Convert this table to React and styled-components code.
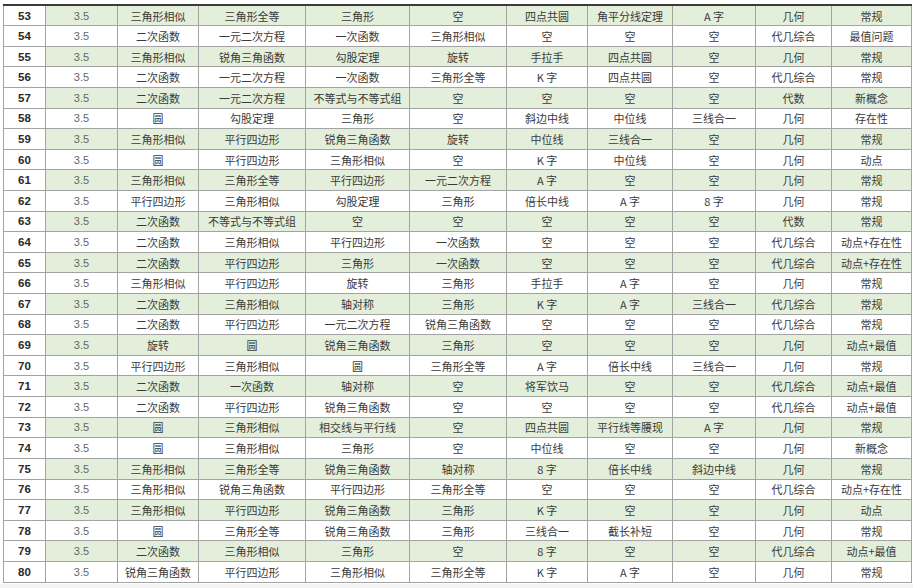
import React from "react";
import styled, { createGlobalStyle } from "styled-components";

const Global = createGlobalStyle`
  html, body { margin: 0; padding: 0; background: #ffffff; }
  body { font-family: "Noto Sans CJK SC", "Liberation Sans", sans-serif; }
`;

const Page = styled.div`
  width: 913px;
  height: 588px;
  padding: 4px 2px 0 3px;
  box-sizing: border-box;
  background: linear-gradient(#fff 0, #fff 584px, #f3f3f3 584px);
  overflow: hidden;
`;

const Table = styled.table`
  width: 908px;
  border-collapse: collapse;
  table-layout: fixed;
  border-top: 2px solid #3a3a3a;
`;

const Row = styled.tr`
  height: 20.62px;
  background: ${(p) => (p.$shade ? "#e3efda" : "#ffffff")};
`;

const Cell = styled.td`
  border: 1px solid #a3a3a3;
  padding: 0;
  text-align: center;
  vertical-align: middle;
  font-size: 11px;
  line-height: 14px;
  color: #3a3a3a;
  white-space: nowrap;
  overflow: hidden;
`;

const NumCell = styled(Cell)`
  background: #ffffff;
  font-family: "Liberation Sans", Arial, sans-serif;
  font-weight: bold;
  font-size: 11.5px;
  color: #2a2a2a;
`;

const ScoreCell = styled(Cell)`
  font-family: "Liberation Sans", Arial, sans-serif;
  font-size: 11px;
  color: #666666;
`;

const widths = [42, 72, 81, 107, 104, 97, 81, 85, 83, 76, 80];

const rows = [
  ["三角形相似", "三角形全等", "三角形", "空", "四点共圆", "角平分线定理", "A 字", "几何", "常规"],
  ["二次函数", "一元二次方程", "一次函数", "三角形相似", "空", "空", "空", "代几综合", "最值问题"],
  ["三角形相似", "锐角三角函数", "勾股定理", "旋转", "手拉手", "四点共圆", "空", "几何", "常规"],
  ["二次函数", "一元二次方程", "一次函数", "三角形全等", "K 字", "四点共圆", "空", "代几综合", "常规"],
  ["二次函数", "一元二次方程", "不等式与不等式组", "空", "空", "空", "空", "代数", "新概念"],
  ["圆", "勾股定理", "三角形", "空", "斜边中线", "中位线", "三线合一", "几何", "存在性"],
  ["三角形相似", "平行四边形", "锐角三角函数", "旋转", "中位线", "三线合一", "空", "几何", "常规"],
  ["圆", "平行四边形", "三角形相似", "空", "K 字", "中位线", "空", "几何", "动点"],
  ["三角形相似", "三角形全等", "平行四边形", "一元二次方程", "A 字", "空", "空", "几何", "常规"],
  ["平行四边形", "三角形相似", "勾股定理", "三角形", "倍长中线", "A 字", "8 字", "几何", "常规"],
  ["二次函数", "不等式与不等式组", "空", "空", "空", "空", "空", "代数", "常规"],
  ["二次函数", "三角形相似", "平行四边形", "一次函数", "空", "空", "空", "代几综合", "动点+存在性"],
  ["二次函数", "平行四边形", "三角形", "一次函数", "空", "空", "空", "代几综合", "动点+存在性"],
  ["三角形相似", "平行四边形", "旋转", "三角形", "手拉手", "A 字", "空", "几何", "常规"],
  ["二次函数", "三角形相似", "轴对称", "三角形", "K 字", "A 字", "三线合一", "代几综合", "常规"],
  ["二次函数", "平行四边形", "一元二次方程", "锐角三角函数", "空", "空", "空", "代几综合", "常规"],
  ["旋转", "圆", "锐角三角函数", "三角形", "空", "空", "空", "几何", "动点+最值"],
  ["平行四边形", "三角形相似", "圆", "三角形全等", "A 字", "倍长中线", "三线合一", "几何", "常规"],
  ["二次函数", "一次函数", "轴对称", "空", "将军饮马", "空", "空", "代几综合", "动点+最值"],
  ["二次函数", "平行四边形", "锐角三角函数", "空", "空", "空", "空", "代几综合", "动点+最值"],
  ["圆", "三角形相似", "相交线与平行线", "空", "四点共圆", "平行线等腰现", "A 字", "几何", "常规"],
  ["圆", "三角形相似", "三角形", "空", "中位线", "空", "空", "几何", "新概念"],
  ["三角形相似", "三角形全等", "锐角三角函数", "轴对称", "8 字", "倍长中线", "斜边中线", "几何", "常规"],
  ["三角形相似", "锐角三角函数", "平行四边形", "三角形全等", "空", "空", "空", "代几综合", "动点+存在性"],
  ["三角形相似", "平行四边形", "锐角三角函数", "三角形", "K 字", "空", "空", "几何", "动点"],
  ["圆", "三角形全等", "锐角三角函数", "三角形", "三线合一", "截长补短", "空", "几何", "常规"],
  ["二次函数", "三角形相似", "三角形", "空", "8 字", "空", "空", "代几综合", "动点+最值"],
  ["锐角三角函数", "平行四边形", "三角形相似", "三角形全等", "K 字", "A 字", "空", "几何", "常规"],
];

export default function App() {
  return (
    <Page>
      <Global />
      <Table>
        <colgroup>
          {widths.map((w, i) => (
            <col key={i} style={{ width: w }} />
          ))}
        </colgroup>
        <tbody>
          {rows.map((r, i) => {
            const n = 53 + i;
            return (
              <Row key={n} $shade={n % 2 === 1}>
                <NumCell>{n}</NumCell>
                <ScoreCell>3.5</ScoreCell>
                {r.map((t, j) => (
                  <Cell key={j}>{t}</Cell>
                ))}
              </Row>
            );
          })}
        </tbody>
      </Table>
    </Page>
  );
}
